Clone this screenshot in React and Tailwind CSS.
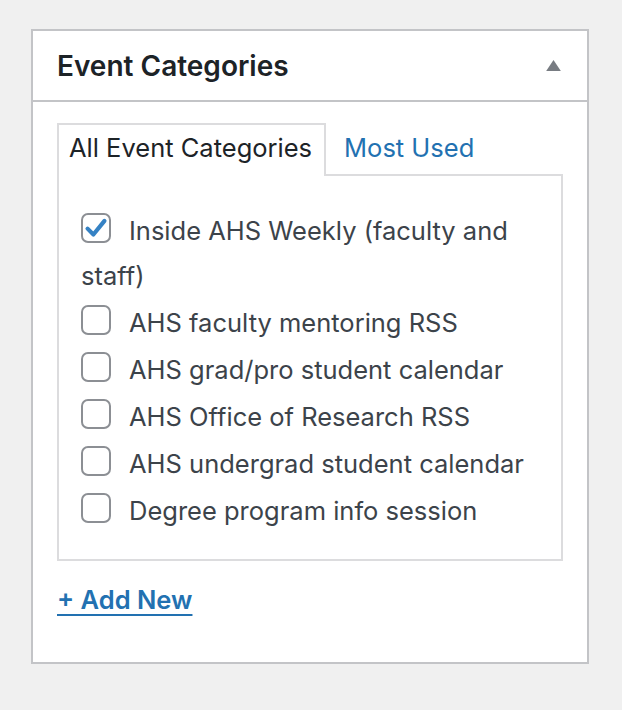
import React from 'react';

const CATEGORIES = [
  { id: 1, label: 'Inside AHS Weekly (faculty and staff)', checked: true },
  { id: 2, label: 'AHS faculty mentoring RSS' },
  { id: 3, label: 'AHS grad/pro student calendar' },
  { id: 4, label: 'AHS Office of Research RSS' },
  { id: 5, label: 'AHS undergrad student calendar' },
  { id: 6, label: 'Degree program info session' },
];

function Checkbox({ checked }) {
  return (
    <span className="relative top-[5px] mr-[18px] inline-flex h-[30px] w-[30px] shrink-0 items-center justify-center rounded-[7px] border-2 border-[#8c8f94] bg-white align-top">
      {checked && (
        <svg viewBox="0 0 20 20" className="h-[26px] w-[26px]">
          <path d="M3.5 10.5 L8 15 L16.5 4.5" fill="none" stroke="#3582c4" strokeWidth="3.2" strokeLinecap="round" strokeLinejoin="round" />
        </svg>
      )}
    </span>
  );
}

export default function App() {
  return (
    <div className="h-[710px] w-[622px] bg-[#f0f0f0] pl-[31px] pt-[29px] font-['Inter','Liberation_Sans',sans-serif]">
      <div className="w-[558px] border-2 border-[#c3c4c7] bg-white">
        <div className="flex h-[71px] items-center justify-between border-b-2 border-[#c3c4c7] pl-[24px] pr-[26px]">
          <h2 className="text-[28px] font-semibold text-[#1d2327]">Event Categories</h2>
          <svg viewBox="0 0 16 12" className="h-[11px] w-[15px]">
            <path d="M8 0 L16 12 L0 12 Z" fill="#787c82" />
          </svg>
        </div>
        <div className="px-[24px] pb-[43px] pt-[21px]">
          <div className="flex items-start text-[25.5px] leading-[38px]">
            <div className="relative z-10 -mb-[2px] h-[53px] border-2 border-b-0 border-[#dcdcde] bg-white pl-[10px] pr-[12px] pt-[4px] text-[#1d2327]">
              All Event Categories
            </div>
            <a href="#" className="ml-[18px] pt-[6px] text-[#2271b1]">Most Used</a>
          </div>
          <div className="border-2 border-[#dcdcde] pb-[24px] pl-[22px] pr-[20px] pt-[32px]">
            <ul className="text-[25.5px] leading-[45px] text-[#3c434a]">
              {CATEGORIES.map((c) => (
                <li key={c.id} className="mb-[2px]">
                  <label>
                    <Checkbox checked={c.checked} />
                    {c.label}
                  </label>
                </li>
              ))}
            </ul>
          </div>
          <a href="#" className="mt-[20px] block w-max text-[25.5px] font-semibold text-[#2271b1] underline underline-offset-[5px]">
            + Add New
          </a>
        </div>
      </div>
    </div>
  );
}
